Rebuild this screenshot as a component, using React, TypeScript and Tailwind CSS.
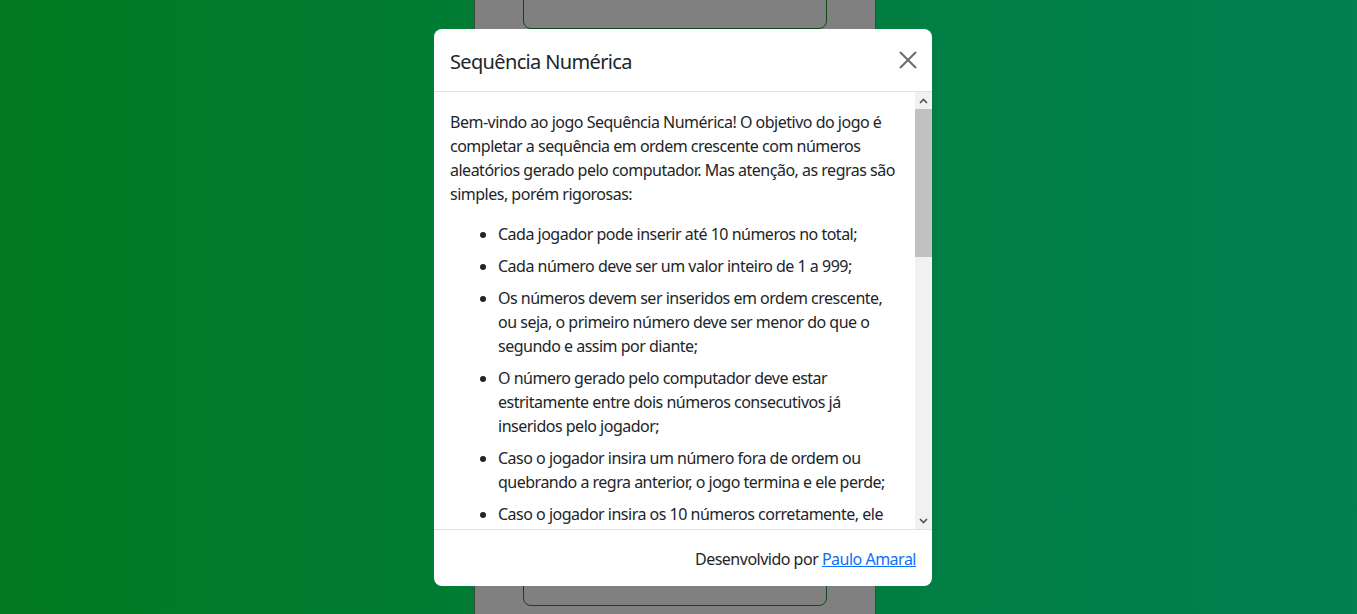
import React from "react";

const para = [
  "Bem-vindo ao jogo Sequência Numérica! O objetivo do jogo é",
  "completar a sequência em ordem crescente com números",
  "aleatórios gerado pelo computador. Mas atenção, as regras são",
  "simples, porém rigorosas:",
];

const items: string[][] = [
  ["Cada jogador pode inserir até 10 números no total;"],
  ["Cada número deve ser um valor inteiro de 1 a 999;"],
  [
    "Os números devem ser inseridos em ordem crescente,",
    "ou seja, o primeiro número deve ser menor do que o",
    "segundo e assim por diante;",
  ],
  [
    "O número gerado pelo computador deve estar",
    "estritamente entre dois números consecutivos já",
    "inseridos pelo jogador;",
  ],
  [
    "Caso o jogador insira um número fora de ordem ou",
    "quebrando a regra anterior, o jogo termina e ele perde;",
  ],
  ["Caso o jogador insira os 10 números corretamente, ele", "vence o jogo."],
];

export default function App() {
  return (
    <div
      className="relative h-[614px] w-[1357px] overflow-hidden bg-linear-to-r from-[#017a1f] to-[#018050] text-[#212529]"
      style={{ fontFamily: '"Noto Sans", "Open Sans", sans-serif' }}
    >
      {/* background page panel (dimmed by backdrop) */}
      <div className="ml-[474px] flex h-full w-[402px] flex-col justify-between border-x border-[#3b4a3b] bg-[#808080]">
        <div className="mx-auto -mt-4 h-[45px] w-[304px] rounded-b-[8px] border border-[#0d4a14]" />
        <div className="mx-auto mb-[8px] h-[29px] w-[304px] rounded-[8px] border border-[#0d4a14]" />
      </div>

      {/* modal */}
      <div className="absolute left-[434px] top-[29px] flex h-[557px] w-[498px] flex-col overflow-hidden rounded-[8px] bg-white">
        <div className="flex h-[63px] shrink-0 items-center justify-between border-b border-[#dee2e6] px-4">
          <h5 className="mt-[3px] text-[20px] leading-[30px] tracking-[-0.65px] text-[#212529]">
            Sequência Numérica
          </h5>
          <button className="mr-[-4px] mt-[0px] flex h-[24px] w-[24px] items-center justify-center">
            <svg width="18" height="18" viewBox="0 0 18 18" fill="none">
              <path d="M1 1L17 17M17 1L1 17" stroke="#6b6b6b" strokeWidth="2" />
            </svg>
          </button>
        </div>

        <div className="flex min-h-0 flex-1">
          <div className="min-w-0 flex-1 overflow-hidden p-4 text-[16px] leading-[24px] tracking-[-0.5px]">
            <p className="mb-4 pt-[2px]">
              {para.map((l, i) => (
                <span key={i} className="block whitespace-nowrap">
                  {l}
                </span>
              ))}
            </p>
            <ul className="list-disc pl-[48px]">
              {items.map((lines, i) => (
                <li key={i} className="mb-2">
                  {lines.map((l, j) => (
                    <span key={j} className="block whitespace-nowrap">
                      {l}
                    </span>
                  ))}
                </li>
              ))}
            </ul>
          </div>
          {/* scrollbar */}
          <div className="flex w-[17px] shrink-0 flex-col bg-[#f1f1f1]">
            <div className="flex h-[17px] items-center justify-center">
              <svg width="9" height="6" viewBox="0 0 9 6">
                <path d="M1 5L4.5 1.5L8 5" stroke="#505050" strokeWidth="1.6" fill="none" />
              </svg>
            </div>
            <div className="h-[148px] bg-[#c1c1c1]" />
            <div className="flex-1" />
            <div className="flex h-[17px] items-center justify-center">
              <svg width="9" height="6" viewBox="0 0 9 6">
                <path d="M1 1L4.5 4.5L8 1" stroke="#505050" strokeWidth="1.6" fill="none" />
              </svg>
            </div>
          </div>
        </div>

        <div className="flex h-[57px] shrink-0 items-center justify-end border-t border-[#dee2e6] px-4 pt-[2px] text-[16px] leading-[24px] tracking-[-0.5px]">
          <span>
            Desenvolvido por{" "}
            <a href="#" className="text-[#0d6efd] underline">
              Paulo Amaral
            </a>
          </span>
        </div>
      </div>
    </div>
  );
}
